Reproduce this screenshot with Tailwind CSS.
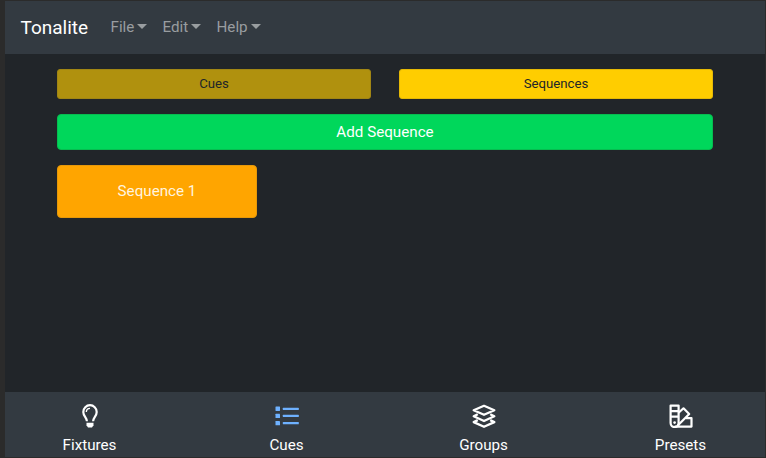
<!DOCTYPE html>
<html lang="en">
<head>
<meta charset="utf-8">
<title>Tonalite</title>
<script src="https://cdn.jsdelivr.net/npm/@tailwindcss/browser@4"></script>
</head>
<body class="h-[458px] w-[766px] overflow-hidden bg-[#2b2b2b] pt-px pr-px pb-px pl-[5px] font-[Roboto,sans-serif] text-[15.2px] leading-[22px]">
<div class="flex h-full flex-col bg-[#212529]">
  <nav class="flex h-[53px] shrink-0 items-center bg-[#333a41] pb-[2px] pl-[15.5px] text-[#999da0]">
    <a class="mr-[22px] w-[68px] whitespace-nowrap pt-[2px] text-[19px] text-white">Tonalite</a>
    <a class="flex w-[52px] items-center gap-[3px]">File<svg class="h-[5px] w-[10px]" viewBox="0 0 10 5" fill="currentColor"><path d="M0 0h10L5 5z"/></svg></a>
    <a class="flex w-[54px] items-center gap-[3px]">Edit<svg class="h-[5px] w-[10px]" viewBox="0 0 10 5" fill="currentColor"><path d="M0 0h10L5 5z"/></svg></a>
    <a class="flex items-center gap-[3px]">Help<svg class="h-[5px] w-[10px]" viewBox="0 0 10 5" fill="currentColor"><path d="M0 0h10L5 5z"/></svg></a>
  </nav>
  <main class="flex-1 px-[52px] pt-[15px]">
    <div class="grid grid-cols-2 gap-[28px] text-[13.2px] text-[#212529]">
      <button class="h-[30px] rounded-[3px] border border-[#a18614] bg-[#b0910e]">Cues</button>
      <button class="h-[30px] rounded-[3px] border border-[#e5b905] bg-[#ffcd00]">Sequences</button>
    </div>
    <button class="mt-[15px] block h-[36px] w-full rounded-[4px] border border-[#06bd50] bg-[#00d75b] text-white">Add Sequence</button>
    <button class="mt-[15px] block h-[53px] w-[200px] rounded-[4px] border border-[#e69809] bg-[#ffa500] pb-[2px] text-[#fff4df]">Sequence 1</button>
  </main>
  <footer class="h-[65px] shrink-0 overflow-hidden bg-[#333a41] text-white">
    <div class="-mx-[14px] grid grid-cols-4 pt-[12px] text-center">
      <a class="flex flex-col items-center gap-[6px]">
        <svg class="h-6 w-6" viewBox="0 0 24 24" fill="none" stroke="currentColor" stroke-width="2.2"><path d="M8.9 17.2C8.8 13.8 5.3 12.3 5.3 7.9A6.7 6.7 0 0 1 18.7 7.9C18.7 12.3 15.2 13.8 15.1 17.2"/><path d="M8.3 8A3.8 3.8 0 0 1 12 4.4" stroke-width="1.4"/><path d="M8.5 18.8h7v2.5L14 23.6h-4l-1.5-2.3z" fill="currentColor" stroke="none"/></svg>
        <span>Fixtures</span>
      </a>
      <a class="flex flex-col items-center gap-[6px]">
        <svg class="h-6 w-6 text-[#6eb1ff]" viewBox="0 0 24 24" fill="currentColor"><rect x=".5" y="2.6" width="4.5" height="4.3" rx=".4"/><rect x=".5" y="9.8" width="4.5" height="4.3" rx=".4"/><rect x=".5" y="17" width="4.5" height="4.3" rx=".4"/><rect x="7.8" y="3.8" width="16" height="2.2" rx=".5"/><rect x="7.8" y="10.8" width="16" height="2.2" rx=".5"/><rect x="7.8" y="18" width="16" height="2.2" rx=".5"/></svg>
        <span>Cues</span>
      </a>
      <a class="flex flex-col items-center gap-[6px]">
        <svg class="h-6 w-6" viewBox="0 0 24 24" fill="none" stroke="currentColor" stroke-width="2.3" stroke-linejoin="round"><path d="M12 1.8 22.3 6.3 12 10.8 1.7 6.3z"/><path d="M5.8 10.3 1.7 12.3 12 17 22.3 12.3 18.2 10.3"/><path d="M5.8 16.1 1.7 18.1 12 22.8 22.3 18.1 18.2 16.1"/></svg>
        <span>Groups</span>
      </a>
      <a class="flex flex-col items-center gap-[6px]">
        <svg class="h-6 w-6" viewBox="0 0 24 24" fill="none" stroke="currentColor" stroke-width="2.2" stroke-linejoin="round"><path d="M1.6 1.6h8v17.5a4 4 0 0 1-8 0zM1.6 7.1h8M1.6 12.7h8"/><path d="M9.6 8.8 14.5 4.3 20.2 10 8.5 21.8M16.8 14.2h5.7v8.4H5.6"/><circle cx="5.6" cy="18.6" r="1.3" fill="currentColor" stroke="none"/></svg>
        <span>Presets</span>
      </a>
    </div>
  </footer>
</div>
</body>
</html>
